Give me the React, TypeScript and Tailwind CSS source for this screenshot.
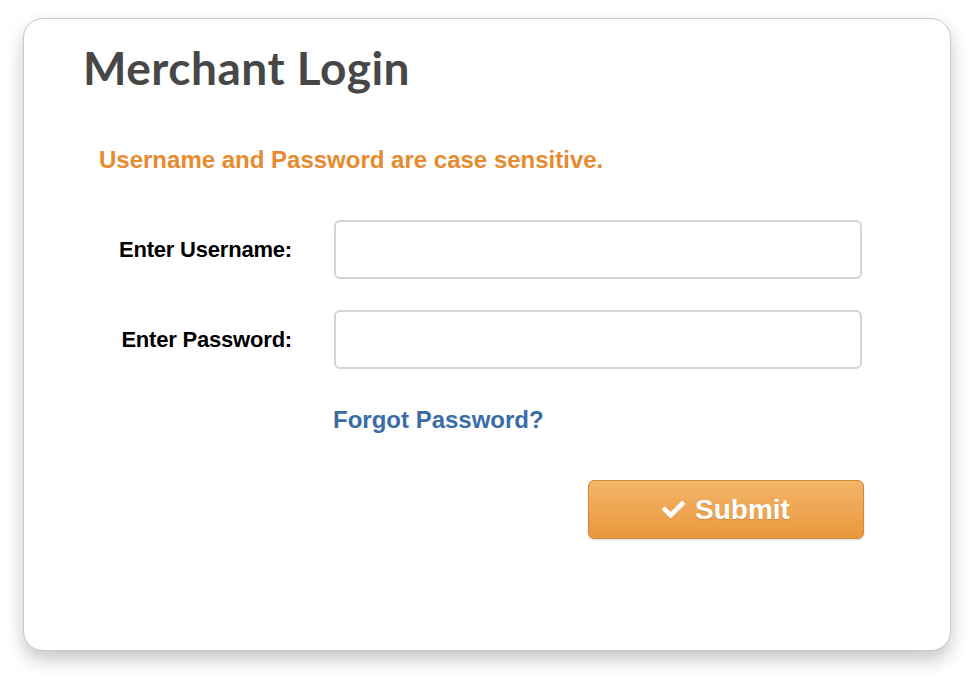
import React from 'react';
import { FaCheck } from 'react-icons/fa';

const FormRow = ({ label, type }: { label: string; type: string }) => (
  <div className="flex items-center">
    <label className="w-[268px] text-right text-[22px] font-bold text-black font-['Liberation_Sans',Arial,sans-serif] tracking-[-0.2px]">
      {label}
    </label>
    <input
      type={type}
      className="ml-[42px] w-[528px] h-[59px] rounded-[6px] border-2 border-[#d4d4d4] bg-white px-3 outline-none"
    />
  </div>
);

export default function App() {
  return (
    <div className="w-[980px] h-[680px] bg-white pt-[18px] pl-[23px]">
      <div className="w-[928px] h-[633px] rounded-[20px] border border-[#c9c9c9] bg-white shadow-[0_9px_18px_rgba(0,0,0,0.22)] pt-[21px]">
        <h1 className="pl-[59px] h-[56px] leading-[56px] text-[46px] font-bold text-[#474747] font-['Lato','Noto_Sans',sans-serif] tracking-[0.5px]">
          Merchant Login
        </h1>

        <p className="mt-[50px] pl-[75px] h-[28px] leading-[28px] text-[24px] font-bold text-[#e88a2e] font-['Liberation_Sans',Arial,sans-serif]">
          Username and Password are case sensitive.
        </p>

        <div className="mt-[46px] flex flex-col gap-[31px]">
          <FormRow label="Enter Username:" type="text" />
          <FormRow label="Enter Password:" type="password" />
        </div>

        <div className="mt-[37px] pl-[309px] h-[28px] leading-[28px]">
          <a href="#" className="text-[24px] font-bold text-[#3a6da6] font-['Liberation_Sans',Arial,sans-serif]">
            Forgot Password?
          </a>
        </div>

        <div className="mt-[46px] pl-[564px]">
          <button className="w-[276px] h-[59px] rounded-[6px] border border-[#cd8a3a] bg-gradient-to-b from-[#f3b568] to-[#e9983a] flex items-center justify-center gap-[10px] text-white text-[28px] font-bold font-['Liberation_Sans',Arial,sans-serif] shadow-[0_1px_2px_rgba(0,0,0,0.15)] [text-shadow:0_1px_1px_rgba(0,0,0,0.15)]">
            <FaCheck className="w-[23px] h-[23px]" />
            Submit
          </button>
        </div>
      </div>
    </div>
  );
}
